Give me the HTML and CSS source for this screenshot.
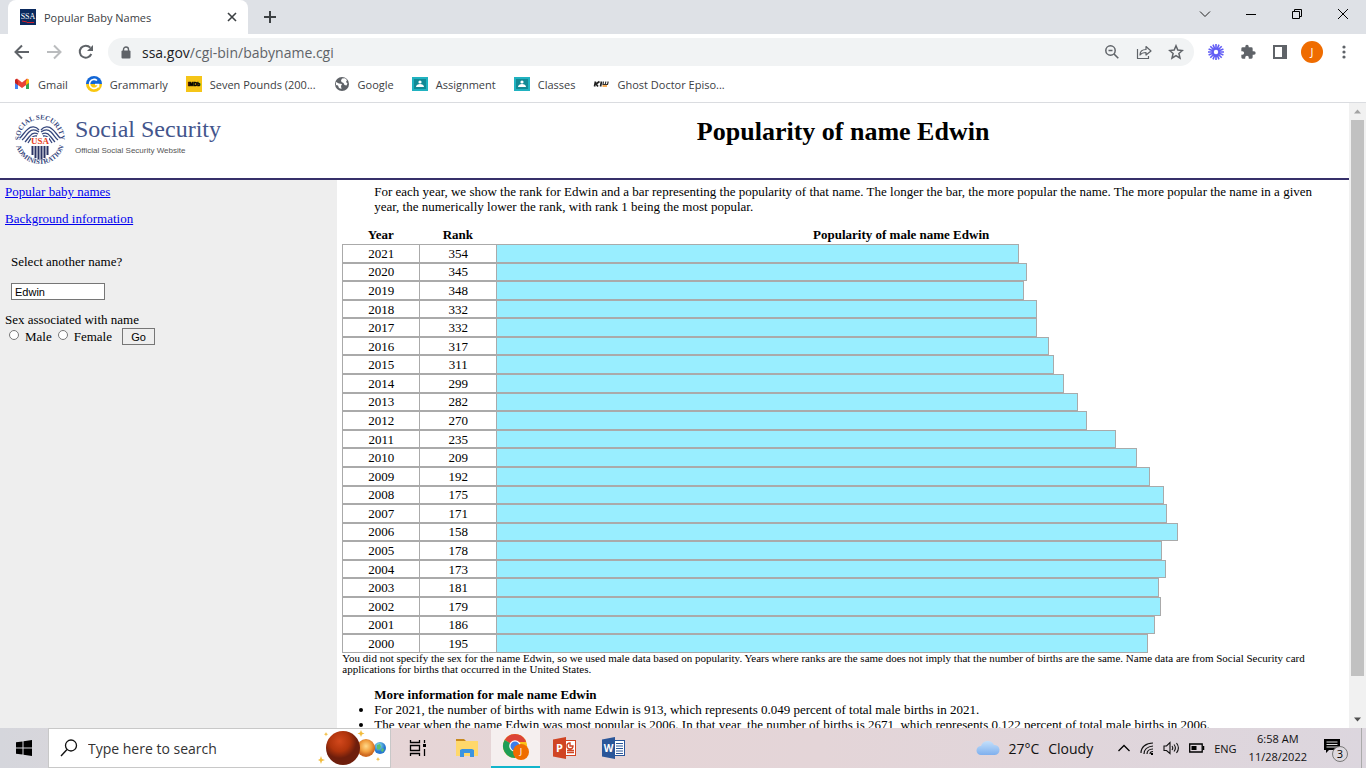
FILE: index.html
```html
<!DOCTYPE html>
<html lang="en">

<head>
    <meta charset="UTF-8" />
    <meta name="viewport" content="width=device-width, initial-scale=1.0" />
    <title>Popular Baby Names</title>
    <link rel="stylesheet" href="styles.css">
</head>

<body>
    <!-- tab strip -->
    <div class="tabstrip">
        <div class="tab">
            <svg class="favicon" width="16" height="16" viewBox="0 0 16 16">
                <rect width="16" height="16" fill="#0b2a5e" />
                <text x="8" y="10" text-anchor="middle" font-family="Liberation Serif" font-size="8" fill="#fff">SSA</text>
                <path d="M2 12l5 1M7 13.500h7" stroke="#d0202e" fill="none" />
            </svg>
            <span class="tab-title">Popular Baby Names</span>
            <button class="tab-close" aria-label="Close tab">
                <svg width="10" height="10" viewBox="0 0 10 10"><path d="M1 1l8 8M9 1l-8 8" stroke="#3c4043" stroke-width="1.600" /></svg>
            </button>
        </div>
        <button class="new-tab" aria-label="New tab">
            <svg width="12" height="12" viewBox="0 0 12 12"><path d="M6 0v12M0 6h12" stroke="#3c4043" stroke-width="2" /></svg>
        </button>
        <div class="window-controls">
            <button aria-label="Search tabs"><svg width="12" height="12" viewBox="0 0 12 12"><path d="M1 3.500l5 5 5-5" stroke="#222" fill="none" /></svg></button>
            <button aria-label="Minimize"><svg width="12" height="12" viewBox="0 0 12 12"><path d="M1 6.500h10" stroke="#000" /></svg></button>
            <button aria-label="Restore"><svg width="12" height="12" viewBox="0 0 12 12"><path d="M1.500 3.500h7v7h-7zM3.500 3v-1.500h7v7h-2" stroke="#000" fill="none" /></svg></button>
            <button aria-label="Close"><svg width="12" height="12" viewBox="0 0 12 12"><path d="M1 1l10 10M11 1l-10 10" stroke="#000" /></svg></button>
        </div>
    </div>

    <!-- toolbar -->
    <div class="toolbar">
        <button class="icon-button" aria-label="Back">
            <svg width="16" height="16" viewBox="0 0 16 16"><path d="M15 8H2M8 1.500L1.500 8 8 14.500" stroke="#5f6368" stroke-width="2" fill="none" /></svg>
        </button>
        <button class="icon-button" aria-label="Forward">
            <svg width="16" height="16" viewBox="0 0 16 16"><path d="M1 8h13M8 1.500L14.500 8 8 14.500" stroke="#babcbe" stroke-width="2" fill="none" /></svg>
        </button>
        <button class="icon-button" aria-label="Reload">
            <svg width="16" height="16" viewBox="0 0 16 16"><path d="M13.300 10a6 6 0 1 1-1-6.300" stroke="#5f6368" stroke-width="2" fill="none" /><path d="M15 1v6H9z" fill="#5f6368" /></svg>
        </button>
        <div class="omnibox">
            <svg class="lock" width="10" height="13" viewBox="0 0 10 13"><path d="M2.500 5V3.500a2.500 2.500 0 0 1 5 0V5" stroke="#5f6368" stroke-width="1.400" fill="none" /><rect x="0.500" y="4.500" width="9" height="8" rx="1" fill="#5f6368" /></svg>
            <div class="url">ssa.gov<span>/cgi-bin/babyname.cgi</span></div>
            <button class="icon-button" aria-label="Zoom">
                <svg width="14" height="14" viewBox="0 0 14 14"><circle cx="5.500" cy="5.500" r="4.700" stroke="#5f6368" stroke-width="1.500" fill="none" /><path d="M3.500 5.500h4M9 9l4.300 4.300" stroke="#5f6368" stroke-width="1.600" /></svg>
            </button>
            <button class="icon-button" aria-label="Share">
                <svg width="16" height="16" viewBox="0 0 16 16"><path d="M1.500 5v9.500h11V12M4 11c0-4 2.500-5.500 6-5.500V2.500l5 4.500-5 4V8.500C7.500 8.500 5.500 9 4 11z" stroke="#5f6368" stroke-width="1.200" fill="none" stroke-linejoin="round" /></svg>
            </button>
            <button class="icon-button" aria-label="Bookmark this page">
                <svg width="16" height="16" viewBox="0 0 16 16"><path d="M8 1.800l1.800 4.300 4.600.4-3.500 3 1.100 4.600L8 11.600l-4 2.500 1.100-4.600-3.500-3 4.600-.4z" stroke="#5f6368" stroke-width="1.500" fill="none" /></svg>
            </button>
        </div>
        <button class="icon-button" aria-label="Loom">
            <svg width="16" height="16" viewBox="0 0 16 16"><path d="M8 0v16M0 8h16M2.300 2.300l11.400 11.400M13.700 2.300L2.300 13.700M5 .6l6 14.800M11 .6L5 15.400M.6 5l14.800 6M15.400 5L.6 11" stroke="#625df5" stroke-width="1.600" /><circle cx="8" cy="8" r="4" fill="#625df5" /><circle cx="8" cy="8" r="2.200" fill="#fff" /></svg>
        </button>
        <button class="icon-button" aria-label="Extensions">
            <svg width="16" height="16" viewBox="0 0 24 24"><path d="M21 11h-2V7a2 2 0 0 0-2-2h-4V3.500a2.500 2.500 0 0 0-5 0V5H4a2 2 0 0 0-2 2v3.800h1.500a2.700 2.700 0 0 1 0 5.400H2V20a2 2 0 0 0 2 2h3.800v-1.500a2.700 2.700 0 0 1 5.400 0V22H17a2 2 0 0 0 2-2v-4h2a2.500 2.500 0 0 0 0-5z" fill="#5f6368" /></svg>
        </button>
        <button class="icon-button" aria-label="Side panel">
            <svg width="14" height="14" viewBox="0 0 14 14"><path d="M1 1h12v12H1z" stroke="#5f6368" stroke-width="2" fill="#fff" /><path d="M9 0h5v14H9z" fill="#5f6368" /></svg>
        </button>
        <button class="icon-button" aria-label="Profile"><span class="avatar">J</span></button>
        <button class="icon-button" aria-label="Menu">
            <svg width="4" height="14" viewBox="0 0 4 14"><g fill="#5f6368"><circle cx="2" cy="2" r="1.600" /><circle cx="2" cy="7" r="1.600" /><circle cx="2" cy="12" r="1.600" /></g></svg>
        </button>
    </div>

    <!-- bookmarks -->
    <nav class="bookmarks">
        <a href="#">
            <svg width="16" height="16" viewBox="0 0 16 16"><path d="M1 3.500V13h3V7z" fill="#4285f4" /><path d="M15 3.500V13h-3V7z" fill="#34a853" /><path d="M1 4v3l7 5 7-5V4l-2-1.500-5 4-5-4z" fill="#ea4335" /><path d="M12 5.500V9l3-2.200V4l-1.500-1.300z" fill="#fbbc04" /><path d="M1 4v2.800L4 9V5.500L2.500 2.700z" fill="#c5221f" /></svg>
            Gmail</a>
        <a href="#">
            <svg width="16" height="16" viewBox="0 0 16 16"><path d="M0 8a8 8 0 0 1 16 0z" fill="#1266d6" /><path d="M0 8a8 8 0 0 0 16 0z" fill="#f9c710" /><path d="M11 4.500a4.500 4.500 0 1 0 1.500 4H9M12.500 8.500v3" stroke="#fff" stroke-width="1.600" fill="none" /></svg>
            Grammarly</a>
        <a href="#">
            <svg width="16" height="16" viewBox="0 0 16 16"><rect width="16" height="16" fill="#f5c518" /><text x="8" y="10" text-anchor="middle" font-family="Liberation Sans" font-size="5" font-weight="bold" stroke="#000" stroke-width="0.500">IMDb</text></svg>
            Seven Pounds (200...</a>
        <a href="#">
            <svg width="16" height="16" viewBox="0 0 16 16"><circle cx="8" cy="8" r="7" fill="#5f6368" /><path d="M2 6l3 1.500 3 .5-1 2 .5 3-2.500-1-1-2.500L2 9zM8 2.500l3-.3 2 1.800-1 2 1.500 1.500-1 2-2-.5-1-2-2-1-.5-1.500z" fill="#fff" /></svg>
            Google</a>
        <a href="#">
            <svg width="16" height="16" viewBox="0 0 16 16"><rect y="1" width="16" height="14" fill="#20b2c0" /><rect x="2" y="3" width="12" height="10" fill="#128a95" /><circle cx="8" cy="6" r="1.600" fill="#fff" /><path d="M4 11c0-2 2-3 4-3s4 1 4 3z" fill="#fff" /></svg>
            Assignment</a>
        <a href="#">
            <svg width="16" height="16" viewBox="0 0 16 16"><rect y="1" width="16" height="14" fill="#20b2c0" /><rect x="2" y="3" width="12" height="10" fill="#128a95" /><circle cx="8" cy="6" r="1.600" fill="#fff" /><path d="M4 11c0-2 2-3 4-3s4 1 4 3z" fill="#fff" /></svg>
            Classes</a>
        <a href="#">
            <svg width="16" height="16" viewBox="0 0 16 16"><path d="M2.500 5.500L1.500 10.500M6.500 5.500L3 8l2 2.500M8.500 5.500l-1 5" stroke="#222" stroke-width="1.700" fill="none" /><path d="M10.500 5.500l-.5 3h4.500l.7-3M12.800 5.500l-.5 3" stroke="#333" stroke-width="1.200" fill="none" /><path d="M9.500 10h4.500" stroke="#f09020" stroke-width="1.500" /></svg>
            Ghost Doctor Episo...</a>
    </nav>

    <!-- page -->
    <div class="viewport">
        <div class="page">
            <header class="banner">
                <div class="logo">
                    <svg width="54" height="54" viewBox="0 0 54 54">
                        <defs>
                            <path id="arcTop" d="M8 33.500a20.200 20.200 0 1 1 38 0" />
                            <path id="arcBottom" d="M2 26a25 25 0 0 0 50 0" />
                        </defs>
                        <g font-family="Liberation Serif" font-size="7" font-weight="bold" fill="#36477d" text-anchor="middle">
                            <text><textPath href="#arcTop" startOffset="50%">SOCIAL SECURITY</textPath></text>
                            <text><textPath href="#arcBottom" startOffset="50%">ADMINISTRATION</textPath></text>
                        </g>
                        <g fill="none" stroke="#36477d" stroke-width="1.300">
                            <path d="M26 17c-3-4-8-4-11-1-3 2-5 6-8 9M26 19c-4-3-7-3-10 0-3 3-4 6-7 8M25 21c-4-2-6-1-8 2-2 2-3 4-5 6M24 23c-4-1-6 2-9 7" />
                            <path d="M28 17c3-4 8-4 11-1 3 2 5 6 8 9M28 19c4-3 7-3 10 0 3 3 4 6 7 8M29 21c4-2 6-1 8 2 2 2 3 4 5 6M30 23c4-1 6 2 9 7" />
                            <path d="M19.500 33v9M22.500 33v12M25.500 33v13M28.500 33v13M31.500 33v12M34.500 33v9" stroke="#2b3465" stroke-width="2" />
                        </g>
                        <rect x="18" y="24" width="18" height="8" fill="#fff" />
                        <text x="27" y="31" text-anchor="middle" font-family="Liberation Serif" font-size="9" font-weight="bold" fill="#e8401c">USA</text>
                    </svg>
                    <div class="logo-text">
                        <div class="logo-name">Social Security</div>
                        <div class="logo-sub">Official Social Security Website</div>
                    </div>
                </div>
                <h1>Popularity of name Edwin</h1>
            </header>

            <div class="columns">
                <aside class="sidebar">
                    <p><a href="#">Popular baby names</a></p>
                    <p><a href="#">Background information</a></p>
                    <form>
                        <div class="name-field">
                            <label for="name">Select another name?</label>
                            <input type="text" id="name" value="Edwin" />
                        </div>
                        <div>Sex associated with name</div>
                        <div class="sex-row">
                            <input type="radio" name="sex" id="male" /><label for="male">Male</label>
                            <input type="radio" name="sex" id="female" /><label for="female">Female</label>
                            <button type="button" class="go">Go</button>
                        </div>
                    </form>
                </aside>

                <main class="content">
                    <p class="intro">For each year, we show the rank for Edwin and a bar representing the popularity of that name. The longer the bar, the more popular the name. The more popular the name in a given year, the numerically lower the rank, with rank 1 being the most popular.</p>
                    <table class="ranks">
                        <thead>
                            <tr>
                                <th class="narrow">Year</th>
                                <th class="narrow">Rank</th>
                                <th>Popularity of male name Edwin</th>
                            </tr>
                        </thead>
                        <tbody id="rankRows"></tbody>
                    </table>
                    <p class="note">You did not specify the sex for the name Edwin, so we used male data based on popularity. Years where ranks are the same does not imply that the number of births are the same. Name data are from Social Security card applications for births that occurred in the United States.</p>
                    <div class="more">
                        <h2>More information for male name Edwin</h2>
                        <ul>
                            <li>For 2021, the number of births with name Edwin is 913, which represents 0.049 percent of total male births in 2021.</li>
                            <li>The year when the name Edwin was most popular is 2006. In that year, the number of births is 2671, which represents 0.122 percent of total male births in 2006.</li>
                        </ul>
                    </div>
                </main>
            </div>
        </div>
        <div class="scrollbar">
            <svg width="17" height="17" viewBox="0 0 17 17"><path d="M5 10.500l3.500-4 3.500 4z" fill="#a3a3a3" /></svg>
            <div class="track"><div class="thumb"></div></div>
            <svg width="17" height="17" viewBox="0 0 17 17"><path d="M5 6.500l3.500 4 3.500-4z" fill="#505050" /></svg>
        </div>
    </div>

    <!-- taskbar -->
    <footer class="taskbar">
        <button class="start" aria-label="Start">
            <svg width="16" height="16" viewBox="0 0 16 16"><path d="M0 2.300L6.500 1.400V7.500H0zM7.500 1.200L16 0v7.500H7.500zM0 8.500h6.500v6.100L0 13.700zM7.500 8.500H16V16l-8.500-1.200z" /></svg>
        </button>
        <div class="search">
            <svg width="18" height="18" viewBox="0 0 18 18"><circle cx="11" cy="6.500" r="5.500" stroke="#111" stroke-width="1.300" fill="none" /><path d="M7 10.500L1 17" stroke="#111" stroke-width="1.400" /></svg>
            <input type="text" placeholder="Type here to search" aria-label="Type here to search" />
            <svg class="planets" width="70" height="36" viewBox="0 0 70 36">
                <defs>
                    <radialGradient id="mars" cx="40%" cy="30%"><stop offset="0" stop-color="#d2481c" /><stop offset="0.600" stop-color="#b0340c" /><stop offset="1" stop-color="#6e1e0c" /></radialGradient>
                    <radialGradient id="venus" cx="50%" cy="40%"><stop offset="0" stop-color="#ffd98a" /><stop offset="0.600" stop-color="#f2a040" /><stop offset="1" stop-color="#cf6a20" /></radialGradient>
                    <radialGradient id="earth" cx="40%" cy="30%"><stop offset="0" stop-color="#8fe8e8" /><stop offset="1" stop-color="#2878d0" /></radialGradient>
                </defs>
                <circle cx="62" cy="18" r="6" fill="url(#earth)" />
                <path d="M59 15l3-1 1 3-2 3-2-1zM64 18l2 1-1 3-2-1z" fill="#58c070" />
                <circle cx="48" cy="18" r="9" fill="url(#venus)" />
                <circle cx="25" cy="18" r="17" fill="url(#mars)" />
                <path d="M3 26l1 3 3 1-3 1-1 3-1-3-2-1 2-1zM8 2l.6 1.600 1.600.6-1.600.6L8 6.400l-.6-1.600-1.600-.6 1.600-.6zM43 0l1 2.500 2.500 1-2.500 1-1 2.500-1-2.500-2.500-1 2.500-1zM60 27l.6 1.600 1.600.6-1.600.6L60 31.400l-.6-1.600-1.600-.6 1.600-.6z" fill="#f2bc3c" />
            </svg>
        </div>
        <div class="apps">
            <button aria-label="Task View">
                <svg width="18" height="16" viewBox="0 0 18 16"><path d="M1.500 0v2.500h9V0M1.500 5.500h9v5h-9zM1.500 16v-2.500h9V16M15.500 0v3M15.500 9v7" stroke="#000" stroke-width="1.300" fill="none" /><rect x="14" y="4" width="3" height="3" /></svg>
            </button>
            <button aria-label="File Explorer">
                <svg width="22" height="20" viewBox="0 0 22 20"><path d="M0 1h8l2 2H0z" fill="#c98a1c" /><path d="M0 3h22v15H0z" fill="#ffd86b" /><path d="M4 19v-7l2-1h10l2 1v7h-4v-4H8v4z" fill="#3b94e0" /></svg>
            </button>
            <button class="active" aria-label="Google Chrome">
                <svg width="28" height="28" viewBox="0 0 28 28"><circle cx="13" cy="13" r="12" fill="#fbc116" /><path d="M13 13L2.600 7A12 12 0 0 1 23.400 7L24 9H13z" fill="#dc4437" /><path d="M13 13v12A12 12 0 0 1 2.600 7z" fill="#1e9e56" /><circle cx="13" cy="13" r="5.800" fill="#fff" /><circle cx="13" cy="13" r="4.500" fill="#3b7de9" /><circle cx="19" cy="19" r="8" fill="#ef6c00" /><text x="19" y="22" text-anchor="middle" font-family="Open Sans" font-size="9" fill="#fff">J</text></svg>
            </button>
            <button aria-label="PowerPoint">
                <svg width="24" height="22" viewBox="0 0 24 22"><rect x="11.500" y="3.500" width="11" height="15" fill="#fff" stroke="#d04423" /><path d="M17 6a3 3 0 1 0 3 3h-3zM14 13.500h7M14 15.500h7" stroke="#d04423" fill="none" stroke-width="1.400" /><path d="M0 2.500L13 0v22L0 19.500z" fill="#d04423" /><text x="6.500" y="15" text-anchor="middle" font-family="Open Sans" font-weight="bold" font-size="11" fill="#fff">P</text></svg>
            </button>
            <button aria-label="Word">
                <svg width="24" height="22" viewBox="0 0 24 22"><rect x="11.500" y="3.500" width="11" height="15" fill="#fff" stroke="#2a5699" /><path d="M14 6.500h7M14 9h7M14 11.500h7M14 14h7M14 16.500h7" stroke="#2a5699" /><path d="M0 2.500L13 0v22L0 19.500z" fill="#2a5699" /><text x="6.500" y="15" text-anchor="middle" font-family="Open Sans" font-weight="bold" font-size="10" fill="#fff">W</text></svg>
            </button>
        </div>
        <div class="tray">
            <svg width="24" height="18" viewBox="0 0 24 18"><defs><linearGradient id="cloud" x2="0" y2="1"><stop offset="0" stop-color="#c4e0fb" /><stop offset="1" stop-color="#7fb0ee" /></linearGradient></defs><path d="M5 16a4.500 4.500 0 0 1 0-9 7 7 0 0 1 13-1 5 5 0 0 1 1 10z" fill="url(#cloud)" /></svg>
            <span class="weather"><span>27°C</span><span>Cloudy</span></span>
            <div class="tray-icons">
                <svg width="14" height="8" viewBox="0 0 14 8"><path d="M1.500 7L7 1.500 12.500 7" stroke="#000" stroke-width="1.300" fill="none" /></svg>
                <svg width="14" height="14" viewBox="0 0 14 14"><path d="M1 12C1 6 6 2 13 2M4 13c0-4 3-7.500 9-8M7 13c0-2.500 2-5 6-5M10 13c0-1.500 1-2.500 3-2.500" stroke="#111" stroke-width="1.200" fill="none" /><rect x="11" y="12" width="2" height="2" /></svg>
                <svg width="17" height="14" viewBox="0 0 17 14"><path d="M1 5v4.500h2.500L7 12.500V1.500L3.500 5zM9 5q1.500 2 0 4M11 3.500q2.800 3.500 0 7M13.500 2q3.800 5 0 10" stroke="#111" stroke-width="1.100" fill="none" /></svg>
                <svg width="16" height="10" viewBox="0 0 16 10"><path d="M.7 1h12.500v8H.7z" stroke="#000" stroke-width="1.300" fill="none" /><rect x="2.500" y="3" width="5" height="4" /><path d="M14.500 3v4" stroke="#000" stroke-width="1.500" /></svg>
            </div>
            <span class="lang">ENG</span>
            <div class="clock"><span>6:58 AM</span><span>11/28/2022</span></div>
            <button class="notify" aria-label="Notifications">
                <svg width="26" height="26" viewBox="0 0 26 26"><path d="M1 2h16v11H6l-3 3v-3H1z" /><path d="M3.500 5h11M3.500 7.500h11M3.500 10h11" stroke="#ddd" /><circle cx="17" cy="17" r="7.500" fill="#ddd8de" stroke="#777" /><text x="17" y="21" text-anchor="middle" font-family="Open Sans" font-size="11">3</text></svg>
            </button>
            <div class="show-desktop"></div>
        </div>
    </footer>

    <script>
        const ranks = [
            [2021, 354], [2020, 345], [2019, 348], [2018, 332], [2017, 332], [2016, 317],
            [2015, 311], [2014, 299], [2013, 282], [2012, 270], [2011, 235], [2010, 209],
            [2009, 192], [2008, 175], [2007, 171], [2006, 158], [2005, 178], [2004, 173],
            [2003, 181], [2002, 179], [2001, 186], [2000, 195]
        ];

        const tbody = document.getElementById("rankRows");
        ranks.forEach(([year, rank]) => {
            const tr = document.createElement("tr");
            tr.innerHTML = `
                <td>${year}</td>
                <td>${rank}</td>
                <td class="bar-cell"><div class="bar" style="width: ${(1000 - rank) / 10}%"></div></td>
            `;
            tbody.appendChild(tr);
        });
    </script>
</body>

</html>
```
FILE: styles.css
```css
* {
    box-sizing: border-box;
}

html,
body {
    margin: 0;
    padding: 0;
    height: 100%;
    overflow: hidden;
}

body {
    display: flex;
    flex-direction: column;
    font-family: "Open Sans", sans-serif;
    font-size: 11px;
    color: #3c4043;
    background-color: #fff;
}

button {
    display: flex;
    align-items: center;
    justify-content: center;
    border: none;
    padding: 0;
    background: none;
    font-family: inherit;
}

svg {
    flex-shrink: 0;
}

/* tab strip */
.tabstrip {
    display: flex;
    height: 34px;
    flex-shrink: 0;
    padding-left: 8px;
    background-color: #dee1e6;
}

.tab {
    display: flex;
    align-items: center;
    width: 240px;
    padding: 0 8px 0 12px;
    border-radius: 8px 8px 0 0;
    background-color: #fff;
}

.tab-title {
    flex: 1;
    margin-left: 8px;
}

.tab-close {
    width: 16px;
    height: 16px;
}

.new-tab {
    width: 28px;
    margin-left: 8px;
}

.window-controls {
    display: flex;
    height: 28px;
    margin-left: auto;
}

.window-controls button {
    width: 46px;
}

/* toolbar */
.toolbar {
    display: flex;
    align-items: center;
    height: 36px;
    flex-shrink: 0;
    padding: 0 6px;
}

.icon-button {
    width: 32px;
    height: 28px;
}

.omnibox {
    display: flex;
    flex: 1;
    align-items: center;
    height: 28px;
    margin: 0 6px;
    padding: 0 2px 0 13px;
    border-radius: 14px;
    background-color: #f1f3f4;
}

.url {
    flex: 1;
    margin-left: 11px;
    font-size: 14px;
    color: #202124;
}

.url span {
    color: #5f6368;
}

.avatar {
    width: 22px;
    height: 22px;
    border-radius: 50%;
    background-color: #ef6c00;
    color: #fff;
    font-size: 11px;
    line-height: 22px;
}

/* bookmarks */
.bookmarks {
    display: flex;
    align-items: center;
    gap: 18px;
    height: 33px;
    flex-shrink: 0;
    padding: 0 14px 4px;
    border-bottom: 1px solid #dadce0;
}

.bookmarks a {
    display: flex;
    align-items: center;
    gap: 8px;
    color: #3c4043;
    text-decoration: none;
    white-space: nowrap;
}

/* page */
.viewport {
    display: flex;
    flex: 1;
    min-height: 0;
}

.page {
    display: flex;
    flex-direction: column;
    flex: 1;
    overflow: hidden;
    font-family: "Liberation Serif", serif;
    font-size: 13px;
    line-height: 15px;
    color: #000;
}

.banner {
    display: flex;
    height: 77px;
    flex-shrink: 0;
    border-bottom: 2px solid #36306a;
}

.logo {
    display: flex;
    width: 25%;
    padding: 10px 0 0 13px;
}

.logo-text {
    margin: 3px 0 0 8px;
}

.logo-name {
    font-size: 24px;
    line-height: 26px;
    color: #43558c;
}

.logo-sub {
    font-family: "Liberation Sans", sans-serif;
    font-size: 8px;
    line-height: 18px;
    color: #555;
}

h1 {
    flex: 1;
    margin: 14px 0 0;
    font-size: 26px;
    line-height: 30px;
    text-align: center;
}

.columns {
    display: flex;
    flex: 1;
    min-height: 0;
}

.sidebar {
    width: 25%;
    padding: 4px 5px;
    background-color: #eee;
}

.sidebar p {
    margin: 0 0 12px;
}

.sidebar a {
    color: #00e;
}

.name-field {
    display: flex;
    flex-direction: column;
    align-items: flex-start;
    gap: 14px;
    padding: 16px 6px 12px;
}

.name-field input {
    width: 94px;
    height: 17px;
    padding: 0 3px;
    border: 1px solid #767676;
    background-color: #fff;
    font-family: "Liberation Sans", sans-serif;
    font-size: 11px;
}

.sex-row {
    display: flex;
    align-items: center;
    height: 19px;
}

.sex-row input {
    width: 10px;
    height: 10px;
    margin: 0 6px 4px 4px;
}

.sex-row label {
    margin-right: 2px;
}

.go {
    width: 33px;
    height: 17px;
    margin-left: 8px;
    border: 1px solid #767676;
    font-family: "Liberation Sans", sans-serif;
    font-size: 11px;
}

.content {
    flex: 1;
    padding: 4px 3px 0 5px;
}

.intro {
    margin: 0 32px 12px;
}

.ranks {
    width: 96%;
    height: 427px;
    table-layout: fixed;
    border-spacing: 0;
    text-align: center;
}

.ranks th {
    height: 18px;
    padding: 0 0 1px;
}

.ranks .narrow {
    width: 8%;
}

.ranks td {
    padding: 0;
    border: 1px solid #aaa;
    border-right: none;
}

.ranks .bar-cell {
    height: 18px;
    border: none;
}

.bar {
    height: 100%;
    border: 1px solid #aaa;
    background-color: #9ef;
}

.note {
    margin: 0;
    font-size: 11px;
    line-height: 11px;
}

.more {
    margin: 12px 32px 0;
}

.more h2 {
    margin: 0;
    font-size: 13px;
}

.more ul {
    margin: 0;
    padding: 0;
}

/* scrollbar */
.scrollbar {
    display: flex;
    flex-direction: column;
    width: 17px;
    background-color: #f1f1f1;
}

.track {
    flex: 1;
    padding: 0 2px;
}

.thumb {
    height: 94%;
    background-color: #c1c1c1;
}

/* taskbar */
.taskbar {
    display: flex;
    height: 40px;
    flex-shrink: 0;
    background: linear-gradient(to right, #d5d6dc, #e6d5d6 30%, #e4d5d8 60%, #dcd6de);
    color: #111;
}

.start {
    width: 48px;
}

.search {
    display: flex;
    align-items: center;
    width: 343px;
    padding: 0 2px 0 11px;
    border: 1px solid #c8c8c8;
    background-color: #fff;
}

.search input {
    flex: 1;
    min-width: 0;
    margin-left: 10px;
    padding: 0;
    border: none;
    font-family: inherit;
    font-size: 14px;
}

.search input::placeholder {
    color: #333;
}

.apps {
    display: flex;
    margin-left: 2px;
}

.apps button {
    width: 49px;
}

.apps .active {
    border-bottom: 2px solid #12b5cb;
    background-color: #f5efef;
}

.tray {
    display: flex;
    align-items: center;
    margin-left: auto;
}

.weather {
    display: flex;
    gap: 9px;
    margin: 0 24px 0 8px;
    font-size: 14px;
}

.tray-icons {
    display: flex;
    align-items: center;
    gap: 9px;
}

.lang {
    margin: 0 12px 0 9px;
}

.clock {
    display: flex;
    flex-direction: column;
    align-items: center;
    line-height: 18px;
}

.notify {
    margin: 4px 12px 0 16px;
}

.show-desktop {
    width: 5px;
    height: 40px;
    border-left: 1px solid #aaa;
}
```
